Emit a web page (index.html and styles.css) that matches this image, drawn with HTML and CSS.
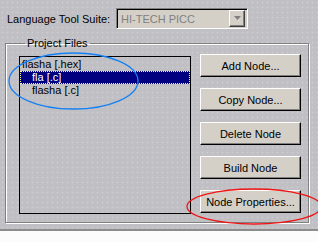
FILE: index.html
```html
<!DOCTYPE html>
<html lang="en">
<head>
    <meta charset="UTF-8">
    <title>Project Files</title>
    <link rel="stylesheet" href="styles.css">
</head>
<body>
    <div class="dialog">
        <!-- Tool suite selector -->
        <div class="suite-row">
            <label class="suite-label">Language Tool Suite:</label>
            <div class="combo">
                <span class="combo-text">HI-TECH PICC</span>
                <span class="combo-btn">
                    <svg width="7" height="5" viewBox="0 0 7 5"><path d="M0 0h7L3.5 4z" fill="#808080"/><path d="M4 5h1" stroke="#fff"/></svg>
                </span>
            </div>
        </div>

        <!-- Project files group -->
        <fieldset class="group">
            <legend>Project Files</legend>
            <div class="group-body">
                <ul class="file-list">
                    <li>flasha [.hex]</li>
                    <li class="child selected">fla [.c]</li>
                    <li class="child">flasha [.c]</li>
                </ul>
                <div class="actions">
                    <button>Add Node...</button>
                    <button>Copy Node...</button>
                    <button>Delete Node</button>
                    <button>Build Node</button>
                    <button>Node Properties...</button>
                </div>
            </div>
        </fieldset>

        <!-- hand-drawn marks -->
        <svg class="marks" width="318" height="242" viewBox="0 0 318 242">
            <ellipse cx="73.5" cy="81" rx="64.5" ry="28" fill="none" stroke="#1580f5" stroke-width="1.3"/>
            <ellipse cx="254" cy="206.5" rx="67" ry="17.5" fill="none" stroke="#f01515" stroke-width="1.3"/>
        </svg>
    </div>
</body>
</html>
```

FILE: styles.css
```css
body {
    margin: 0;
    background: #fcfcfc;
    font-family: "Liberation Sans", Arial, sans-serif;
    font-size: 11px;
    color: #000;
}
.dialog {
    position: relative;
    height: 229px;
    background-color: #c0bfc3;
    background-image: radial-gradient(circle, #cfced2 0.7px, transparent 1.1px);
    background-size: 5px 5px;
    border-bottom: 2px solid #8c8c8c;
    overflow: hidden;
}
.suite-row {
    display: flex;
    align-items: center;
    padding: 8px 0 0 7px;
}
.suite-label {
    width: 109px;
}
.combo {
    display: flex;
    align-items: center;
    width: 128px;
    height: 17px;
    padding: 1px;
    background: #d4d0c8;
    border: 1px solid;
    border-color: #808080 #fff #fff #808080;
    box-shadow: inset 1px 1px 0 #000, inset -1px -1px 0 #d4d0c8;
}
.combo-text {
    flex: 1;
    padding-left: 3px;
    color: #808080;
}
.combo-btn {
    display: flex;
    align-items: center;
    justify-content: center;
    width: 14px;
    height: 15px;
    margin-right: 1px;
    background: #d4d0c8;
    border: 1px solid;
    border-color: #fff #404040 #404040 #fff;
    box-shadow: inset -1px -1px 0 #808080;
}
.group {
    margin: 8px 9px 0 5px;
    padding: 0 7px 7px 13px;
    border: 1px solid #808080;
    box-shadow: 1px 1px 0 #fff, inset 1px 1px 0 #fff;
    height: 186px;
    box-sizing: border-box;
}
.group legend {
    padding: 0 2px;
    margin-left: 6px;
}
.group-body {
    display: flex;
    gap: 9px;
    margin-top: 5px;
}
.file-list {
    list-style: none;
    margin: 2px 0 0;
    padding: 1px 0 0;
    width: 172px;
    height: 158px;
    box-sizing: border-box;
    border: 1px solid #000;
}
.file-list li {
    height: 13px;
    line-height: 13px;
    padding-left: 2px;
    box-sizing: border-box;
}
.file-list li.child {
    padding-left: 12px;
}
.file-list li.selected {
    background: #000080;
    color: #fff;
    outline: 1px dotted #ffff80;
    outline-offset: -1px;
}
.actions {
    display: flex;
    flex-direction: column;
    gap: 11px;
}
.actions button {
    width: 101px;
    height: 23px;
    padding: 0;
    font-family: inherit;
    font-size: 11px;
    color: #000;
    background: #d4d0c8;
    border: 1px solid;
    border-color: #fff #000 #000 #fff;
    box-shadow: inset -1px -1px 0 #808080;
}
.marks {
    position: absolute;
    left: 0;
    top: 0;
    pointer-events: none;
}
```
